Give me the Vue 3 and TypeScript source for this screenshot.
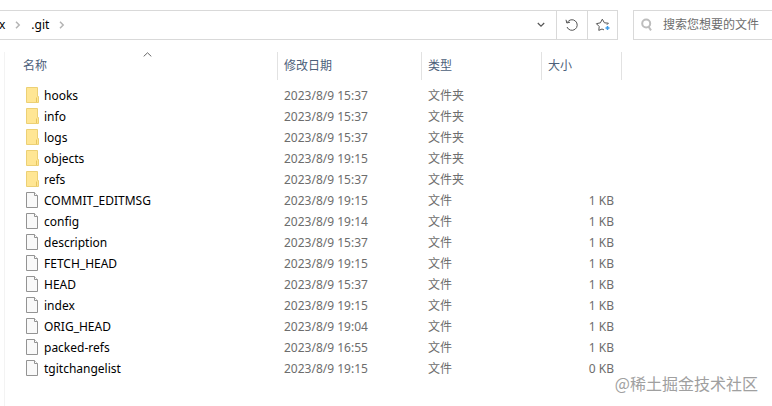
<script setup lang="ts">
import { ref } from 'vue'

interface Entry {
  name: string
  modified: string
  folder: boolean
  size: string
}

const query = ref('')

const dir = (name: string, time: string): Entry => ({ name, modified: `2023/8/9 ${time}`, folder: true, size: '' })
const file = (name: string, time: string, size = '1 KB'): Entry => ({ name, modified: `2023/8/9 ${time}`, folder: false, size })

const entries: Entry[] = [
  dir('hooks', '15:37'),
  dir('info', '15:37'),
  dir('logs', '15:37'),
  dir('objects', '19:15'),
  dir('refs', '15:37'),
  file('COMMIT_EDITMSG', '19:15'),
  file('config', '19:14'),
  file('description', '15:37'),
  file('FETCH_HEAD', '19:15'),
  file('HEAD', '15:37'),
  file('index', '19:15'),
  file('ORIG_HEAD', '19:04'),
  file('packed-refs', '16:55'),
  file('tgitchangelist', '19:15', '0 KB'),
]
</script>

<template>
  <div class="explorer">
    <header class="toolbar">
      <div class="address">
        <nav class="crumbs">
          <a href="#" class="crumb">x</a>
          <svg class="sep" width="6" height="8" viewBox="0 0 6 8"><path d="M1 0.8 4.2 4 1 7.2" /></svg>
          <a href="#" class="crumb">.git</a>
          <svg class="sep" width="6" height="8" viewBox="0 0 6 8"><path d="M1 0.8 4.2 4 1 7.2" /></svg>
        </nav>
        <button type="button" class="tool" aria-label="历史记录">
          <svg width="8" height="6" viewBox="0 0 8 6"><path d="M0.8 1 4 4.2 7.2 1" /></svg>
        </button>
        <button type="button" class="tool divided" aria-label="刷新">
          <svg width="14" height="14" viewBox="0 0 14 14">
            <path class="thin" d="M2.2 4.6A5.3 5.3 0 1 1 2 9" />
            <path class="thin" d="M1 1.8 1.8 5 5 4.2" />
          </svg>
        </button>
        <button type="button" class="tool divided" aria-label="收藏">
          <svg width="16" height="14" viewBox="0 0 16 14">
            <path class="thin" d="M11.8 6.8 13.4 5.2 9.4 4.8 7.3 1.2 5.4 4.8 1.4 5.7 4.2 8.5 3.8 12.4 7 11 9 11.9" />
            <path class="plus" d="M12.5 8v4M10.5 10h4" />
          </svg>
        </button>
      </div>
      <label class="search">
        <svg width="13" height="14" viewBox="0 0 13 14"><circle cx="5.2" cy="5.5" r="4" /><path d="M7.6 8.8 10 12.4" /></svg>
        <input v-model="query" type="search" placeholder="搜索您想要的文件" aria-label="搜索您想要的文件">
      </label>
    </header>

    <main class="listing">
      <table>
        <colgroup>
          <col class="c-name"><col class="c-date"><col class="c-type"><col class="c-size"><col>
        </colgroup>
        <thead>
          <tr>
            <th class="name" aria-sort="ascending">
              名称
              <svg class="sort" width="9" height="5" viewBox="0 0 9 5"><path d="M0.7 4.4 4.5 0.8 8.3 4.4" /></svg>
            </th>
            <th>修改日期</th>
            <th>类型</th>
            <th>大小</th>
            <td></td>
          </tr>
        </thead>
        <tbody>
          <tr v-for="entry in entries" :key="entry.name">
            <td class="name">
              <div class="item">
                <svg v-if="entry.folder" width="13" height="16" viewBox="0 0 13 16">
                  <path d="M0.5 0.5h11v9h1v6H0.5z" fill="#ffe694" stroke="#ecd075" />
                  <path d="M10.5 15V10.5" stroke="#e8c660" />
                </svg>
                <svg v-else width="13" height="16" viewBox="0 0 13 16">
                  <path d="M0.5 0.5h8l3 3v12h-11z" fill="#f9f9f9" stroke="#939393" />
                  <path d="M8.5 0.5v3h3" fill="#ffffff" stroke="#939393" />
                </svg>
                <span>{{ entry.name }}</span>
              </div>
            </td>
            <td>{{ entry.modified }}</td>
            <td>{{ entry.folder ? '文件夹' : '文件' }}</td>
            <td class="size">{{ entry.size }}</td>
            <td></td>
          </tr>
        </tbody>
      </table>
    </main>

    <div class="watermark">@稀土掘金技术社区</div>
  </div>
</template>

<style>
body {
  background: #fff;
}
</style>

<style scoped>
.explorer {
  box-sizing: border-box;
  position: relative;
  display: flex;
  flex-direction: column;
  gap: 12px;
  min-height: 100vh;
  padding-top: 10px;
  font-family: "Noto Sans", "Noto Sans CJK SC", sans-serif;
  font-size: 12px;
  line-height: 20px;
  color: #6d6d6d;
}

svg {
  flex: none;
  fill: none;
}

.toolbar {
  display: flex;
  gap: 15px;
}

.address,
.search {
  box-sizing: border-box;
  display: flex;
  align-items: center;
  height: 30px;
  border: 1px solid #d9d9d9;
}

.address {
  flex: 1;
  border-left: 0;
}

.crumbs {
  flex: 1;
  display: flex;
  align-items: center;
  gap: 10px;
  margin-left: -1px;
}

.crumb {
  color: #000;
  text-decoration: none;
}

.sep {
  stroke: #b4b4b4;
  stroke-width: 1.5;
}

.tool {
  box-sizing: border-box;
  display: flex;
  align-items: center;
  justify-content: center;
  width: 31px;
  height: 28px;
  padding: 0;
  border: 0;
  background: none;
  stroke: #555;
  stroke-width: 1.2;
}

.tool:last-child {
  width: 30px;
}

.divided {
  border-left: 1px solid #d9d9d9;
}

.thin {
  stroke-width: 1;
}

.plus {
  stroke: #3c9be8;
  stroke-width: 1.5;
}

.search {
  flex: none;
  width: 139px;
  gap: 9px;
  padding-left: 7px;
  border-right: 0;
}

.search svg {
  stroke: #bdbdbd;
  stroke-width: 2;
}

.search input {
  flex: 1;
  min-width: 0;
  padding: 0;
  border: 0;
  outline: 0;
  background: none;
  font: inherit;
  color: #333;
}

.search input::placeholder {
  color: #6d6d6d;
  opacity: 1;
}

.listing {
  flex: 1;
  margin-left: 4px;
  border-left: 1px solid #f3f3f3;
}

table {
  width: 100%;
  table-layout: fixed;
  border-collapse: separate;
  border-spacing: 0;
}

.c-name {
  width: 273px;
}

.c-date {
  width: 144px;
}

.c-type {
  width: 120px;
}

.c-size {
  width: 80px;
}

th,
td {
  box-sizing: border-box;
  height: 21px;
  padding: 0 8px 0 6px;
  text-align: left;
  white-space: nowrap;
}

th {
  position: relative;
  height: 28px;
  border-right: 1px solid #e2e2e2;
  font-weight: 400;
  color: #4c607a;
}

tbody::before {
  content: "";
  display: block;
  height: 5px;
}

.name {
  padding-left: 18px;
}

td.name {
  padding-left: 21px;
  color: #000;
}

.item {
  display: flex;
  align-items: center;
  gap: 5px;
}

.item svg {
  margin-bottom: 2px;
}

td.size {
  text-align: right;
}

.sort {
  position: absolute;
  top: 0;
  right: 125px;
  stroke: #666;
}

.watermark {
  position: absolute;
  right: 14px;
  bottom: 11px;
  font-family: "Noto Sans CJK SC", sans-serif;
  font-size: 16px;
  line-height: 24px;
  color: #a0a0a0;
  text-shadow: 0 0 2px #fff;
}
</style>
